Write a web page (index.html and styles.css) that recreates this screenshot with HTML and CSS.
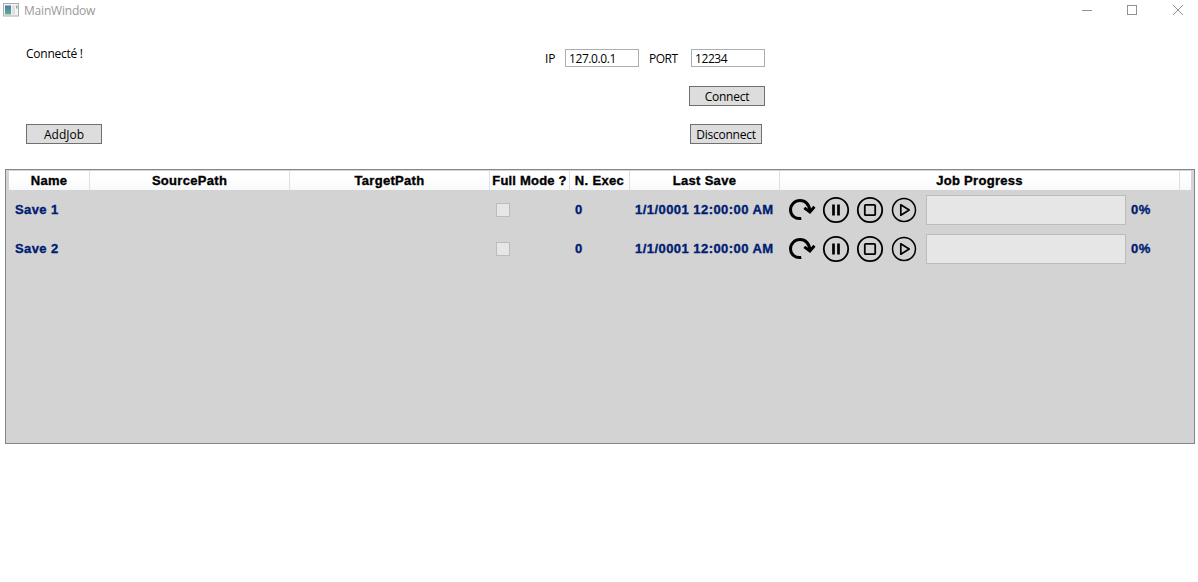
FILE: index.html
```html
<!DOCTYPE html>
<html lang="en">
<head>
<meta charset="utf-8">
<title>MainWindow</title>
<link rel="stylesheet" href="styles.css">
</head>
<body>
<svg class="defs" width="0" height="0">
  <symbol id="redo" viewBox="0 0 28 28"><path d="M13.300 22.400C7.500 23.500 2.500 19.500 2.500 14 2.500 8.500 6.800 4.600 12 4.600c5.500 0 9.500 4 9.700 9.900" fill="none" stroke="#000" stroke-width="3"/><path d="M16.300 11.800l5.600 4.200 4.500-5.200" fill="none" stroke="#000" stroke-width="2.900"/></symbol>
  <symbol id="pause" viewBox="0 0 28 28"><circle cx="14" cy="14" r="12.200" fill="none" stroke="#000" stroke-width="1.800"/><path d="M11.500 8.500v11M16.500 8.500v11" fill="none" stroke="#000" stroke-width="2.700"/></symbol>
  <symbol id="stop" viewBox="0 0 28 28"><circle cx="14" cy="14" r="12.200" fill="none" stroke="#000" stroke-width="1.800"/><rect x="8.800" y="8.800" width="10.400" height="10.400" rx="1" fill="none" stroke="#000" stroke-width="1.800"/></symbol>
  <symbol id="play" viewBox="0 0 28 28"><circle cx="14" cy="14" r="11.500" fill="none" stroke="#000" stroke-width="1.500"/><path d="M10.800 8.800v10.400l8.400-5.200z" fill="none" stroke="#000" stroke-width="1.700" stroke-linejoin="round"/></symbol>
</svg>
<header class="titlebar">
  <svg class="app-icon" width="16" height="14" viewBox="0 0 16 14"><defs><linearGradient id="pane" x2="0" y2="1"><stop stop-color="#4778ad"/><stop offset="1" stop-color="#63b184"/></linearGradient></defs><rect x=".5" y=".5" width="15" height="12.500" fill="#f3f3f3" stroke="#a9adb0"/><rect x="2" y="2.500" width="6" height="9" fill="url(#pane)"/><rect x="9" y="2.500" width="3" height="9" fill="#e0e0e0"/><rect x="13" y="2.500" width="1.500" height="3" fill="#7eb78d"/></svg>
  <span class="title">MainWindow</span>
  <svg class="controls" width="104" height="12" viewBox="0 0 104 12" fill="none" stroke="#929292"><path d="M1 6.500h10M92 1l10 10M102 1L92 11"/><rect x="46.500" y="1.500" width="9" height="9"/></svg>
</header>
<section class="form">
  <div class="left">
    <div class="status">Connecté !</div>
    <button class="btn add">AddJob</button>
  </div>
  <div class="right">
    <div class="fields">
      <label class="ip">IP</label><input class="ip-input" value="127.0.0.1">
      <label class="port">PORT</label><input class="port-input" value="12234">
    </div>
    <button class="btn connect">Connect</button>
    <button class="btn disconnect">Disconnect</button>
  </div>
</section>
<main class="jobs">
  <div class="head">
    <div>Name</div><div>SourcePath</div><div>TargetPath</div><div class="mode">Full Mode ?</div><div class="exec">N. Exec</div><div>Last Save</div><div>Job Progress</div><div></div>
  </div>
  <div class="row">
    <span>Save 1</span><span></span><span></span><span><i class="check"></i></span><span class="count">0</span><span class="date">1/1/0001 12:00:00 AM</span>
    <div class="progress"><svg><use href="#redo"/></svg><svg><use href="#pause"/></svg><svg><use href="#stop"/></svg><svg><use href="#play"/></svg><div class="bar"></div><b>0%</b></div>
  </div>
  <div class="row">
    <span>Save 2</span><span></span><span></span><span><i class="check"></i></span><span class="count">0</span><span class="date">1/1/0001 12:00:00 AM</span>
    <div class="progress"><svg><use href="#redo"/></svg><svg><use href="#pause"/></svg><svg><use href="#stop"/></svg><svg><use href="#play"/></svg><div class="bar"></div><b>0%</b></div>
  </div>
</main>
</body>
</html>
```
FILE: styles.css
```css
* { box-sizing: border-box; }
body { margin: 0; height: 582px; overflow: hidden; background: #fff; font: 12px/16px "Open Sans", sans-serif; color: #000; }
.defs { position: absolute; }
.titlebar { display: flex; height: 22px; padding: 3px 13px 0 3px; color: #999; }
.title { margin-left: 5px; letter-spacing: -.2px; }
.controls { margin: 1px 0 0 auto; }
.form { display: flex; height: 147px; }
.left { width: 545px; padding: 24px 0 0 26px; }
.status { height: 16px; letter-spacing: -.25px; }
.btn { display: block; height: 20px; padding: 1px 0 0; border: 1px solid #707070; background: #ddd; color: #000; font: 12px/16px "Open Sans", sans-serif; letter-spacing: -.25px; text-align: center; }
.add { width: 76px; margin-top: 62px; letter-spacing: 0; }
.right { width: 220px; padding-top: 27px; }
.fields { display: flex; height: 18px; line-height: 19px; }
.ip { width: 20px; letter-spacing: -.2px; }
.port { width: 42px; margin-left: 10px; letter-spacing: -.5px; }
input { width: 74px; height: 18px; padding: 1px 0 0 3px; border: 1px solid #abadb3; background: #fff; color: #000; font: 12px/16px "Open Sans", sans-serif; letter-spacing: -.42px; outline: 0; }
.connect { width: 76px; margin: 19px 0 0 144px; }
.disconnect { width: 72px; margin: 18px 0 0 145px; }
.jobs { width: 1190px; height: 275px; margin-left: 5px; padding: 1px 3px; border: 1px solid #828790; background: #d3d3d3; font: bold 13px/19px "Liberation Sans", Arial, sans-serif; letter-spacing: .4px; -webkit-text-stroke: .35px; }
.head { display: grid; grid-template-columns: 81px 200px 200px 80px 60px 150px 400px 11px; height: 19px; background: linear-gradient(#fff 40%, #f7f8fa); text-align: center; letter-spacing: .3px; }
.head div { border-right: 1px solid #dfe0e2; white-space: nowrap; }
.head div:last-child { border: 0; }
.head .mode { letter-spacing: .2px; }
.head .exec { letter-spacing: .35px; }
.row { display: grid; grid-template-columns: 81px 200px 200px 80px 60px 150px 400px; align-items: center; height: 39px; color: #001c72; }
.row > span { padding-left: 6px; white-space: nowrap; }
.row > .count { padding-left: 5px; }
.row > .date { padding-left: 5px; letter-spacing: .45px; }
.check { display: block; width: 14px; height: 14px; border: 1px solid #bcbcbc; background: #e6e6e6; }
.progress { display: flex; align-items: center; padding-left: 8px; }
.progress svg { width: 28px; height: 28px; margin-right: 6px; flex: none; }
.bar { width: 200px; height: 30px; margin-left: 2px; border: 1px solid #bcbcbc; background: #e6e6e6; }
.progress b { margin-left: 5px; }
```
